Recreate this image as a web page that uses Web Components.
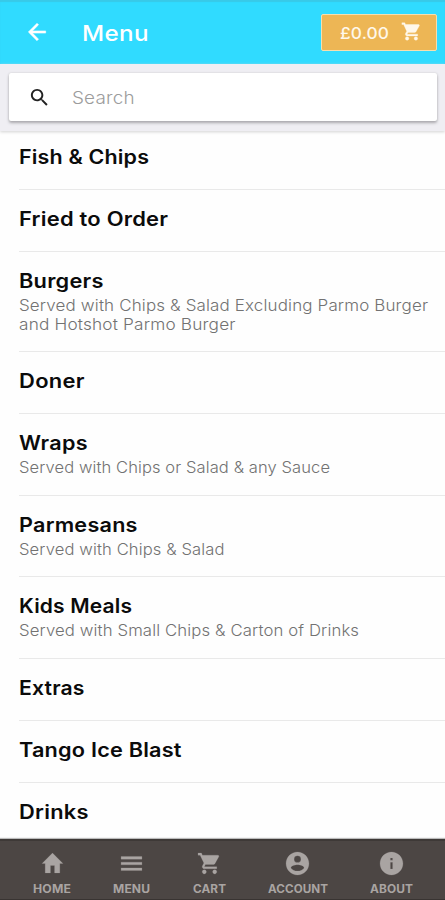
<!DOCTYPE html>
<html lang="en">
<head>
<meta charset="utf-8">
<title>Menu</title>
<style>
html,body{margin:0;height:100%;overflow:hidden;background:#fefefe}
body{font-family:Inter,"Open Sans",sans-serif}
</style>
</head>
<body>
<menu-app></menu-app>
<script>
const ICONS = {
  back: 'M20 11H7.83l5.59-5.59L12 4l-8 8 8 8 1.41-1.41L7.83 13H20v-2z',
  search: 'M15.5 14h-.79l-.28-.27C15.41 12.59 16 11.11 16 9.5 16 5.91 13.09 3 9.5 3S3 5.91 3 9.5 5.91 16 9.5 16c1.61 0 3.09-.59 4.23-1.57l.27.28v.79l5 4.99L20.49 19l-4.99-5zm-6 0C7.01 14 5 11.99 5 9.5S7.01 5 9.5 5 14 7.01 14 9.5 11.99 14 9.5 14z',
  cart: 'M7 18c-1.1 0-1.99.9-1.99 2S5.9 22 7 22s2-.9 2-2-.9-2-2-2zM1 2v2h2l3.6 7.59-1.35 2.45c-.16.28-.25.61-.25.96 0 1.1.9 2 2 2h12v-2H7.42c-.14 0-.25-.11-.25-.25l.03-.12.9-1.63h7.45c.75 0 1.41-.41 1.75-1.03l3.58-6.49c.08-.14.12-.31.12-.48 0-.55-.45-1-1-1H5.21l-.94-2H1zm16 16c-1.1 0-1.99.9-1.99 2s.89 2 1.99 2 2-.9 2-2-.9-2-2-2z',
  home: 'M10 21v-7h4v7h5v-9h3L12 2 2 12h3v9z',
  menu: 'M2 18.8h20v-2.6H2zm0-5.5h20v-2.6H2zM2 5.2v2.6h20V5.2z',
  account: 'M12 1C5.93 1 1 5.93 1 12s4.93 11 11 11 11-4.93 11-11S18.07 1 12 1zm0 3.500a3.300 3.300 0 1 1 0 6.600 3.300 3.300 0 0 1 0-6.600zM12 19.300c-2.750 0-5.200-1.200-6.400-3.100 0-2.300 4.200-3.100 6.400-3.100s6.400.8 6.400 3.100c-1.200 1.900-3.650 3.100-6.400 3.100z',
  about: 'M12 1C5.93 1 1 5.93 1 12s4.93 11 11 11 11-4.93 11-11S18.07 1 12 1zm1.100 16.300h-2.200v-6.500h2.200zm0-8.500h-2.200V6.600h2.200z'
};

class AppIcon extends HTMLElement {
  connectedCallback() {
    const r = this.attachShadow({mode: 'open'});
    r.innerHTML = `<style>:host{display:block;flex:none;width:var(--icon,24px);height:var(--icon,24px)}svg{display:block;width:100%;height:100%;fill:currentColor;stroke:currentColor;stroke-width:var(--weight,0)}</style>
    <svg viewBox="0 0 24 24"><path d="${ICONS[this.getAttribute('name')]}"/></svg>`;
  }
}
customElements.define('app-icon', AppIcon);

/* One line of text, widened mostly by glyph width and partly by tracking, that fills the given width. */
class WideText extends HTMLElement {
  connectedCallback() {
    const r = this.attachShadow({mode: 'open'});
    r.innerHTML = '<style>:host{display:block;flex:none;white-space:nowrap}span{display:inline-block;transform-origin:0 50%}</style><span><slot></slot></span>';
    const span = r.querySelector('span');
    const target = Number(this.getAttribute('width'));
    const natural = span.getBoundingClientRect().width;
    const scale = 1 + 0.85 * (target / natural - 1);
    const gap = (target / scale - natural) / (this.textContent.length - 1);
    span.style.letterSpacing = gap.toFixed(3) + 'px';
    span.style.transform = `scaleX(${scale.toFixed(4)})`;
    this.style.width = target + 'px';
  }
}
customElements.define('wide-text', WideText);

class TopBar extends HTMLElement {
  connectedCallback() {
    this.attachShadow({mode: 'open'}).innerHTML = `<style>
    :host{display:flex;align-items:center;flex:none;box-sizing:border-box;height:64px;padding:1px 8px 0 24px;background:#30dbff;box-shadow:inset 0 2px 1px #38c9e8;color:#fff}
    app-icon{--icon:26px;--weight:.5;margin-top:-1px}
    .title{margin-left:31.500px;font-size:22px;font-weight:500;line-height:28px;margin-top:0}
    .total{display:flex;align-items:center;box-sizing:border-box;margin-left:auto;width:116px;height:37px;padding:0 14px 0 18px;border:1px solid #f6dfae;border-radius:2px;background:#edb655;justify-content:space-between;font-size:16.500px;font-weight:500;color:#fff8ea}
    .total app-icon{--icon:21px;--weight:.4;margin-top:-2px}
    </style>
    <app-icon name="back"></app-icon>
    <wide-text class="title" width="66.5">Menu</wide-text>
    <div class="total"><wide-text width="49">£0.00</wide-text><app-icon name="cart"></app-icon></div>`;
  }
}
customElements.define('top-bar', TopBar);

class SearchBox extends HTMLElement {
  connectedCallback() {
    this.attachShadow({mode: 'open'}).innerHTML = `<style>
    :host{display:block;flex:none;box-sizing:border-box;height:67px;padding:9px 8px 0 9px;background:#efeef3;box-shadow:0 1px 3px #d2d2d2;z-index:1}
    .box{display:flex;align-items:center;height:48px;padding-left:18.500px;background:#fff;border-radius:2px;box-shadow:0 2px 3px #aaa9ae,0 0 2px #ccc;color:#222}
    app-icon{--icon:23px}
    wide-text{margin-left:21px;font-size:17.300px;font-weight:300;color:#9c9c9c}
    </style>
    <div class="box"><app-icon name="search"></app-icon><wide-text width="62.5">Search</wide-text></div>`;
  }
}
customElements.define('search-box', SearchBox);

class MenuRow extends HTMLElement {
  connectedCallback() {
    this.attachShadow({mode: 'open'}).innerHTML = `<style>
    :host{display:block;flex:none;box-sizing:border-box;margin-left:19px;padding-top:16.500px;border-bottom:1px solid #e9e9e9}
    :host(:first-of-type){padding-top:13.500px}
    ::slotted([slot=title]){font-size:19.500px;line-height:24px;font-weight:600;color:#0b0b0b;margin:0 0 3px -.5px}
    ::slotted([slot=note]){font-size:15.300px;line-height:19.300px;font-weight:300;color:#727272;margin-left:-.5px}
    </style><slot name="title"></slot><slot name="note"></slot>`;
  }
}
customElements.define('menu-row', MenuRow);

const ROWS = [
  [59, 'Fish & Chips', 130], [62, 'Fried to Order', 149],
  [100, 'Burgers', 84.5, ['Served with Chips & Salad Excluding Parmo Burger', 409], ['and Hotshot Parmo Burger', 216.5]],
  [62, 'Doner', 65.5],
  [82, 'Wraps', 68.5, ['Served with Chips or Salad & any Sauce', 311]],
  [81, 'Parmesans', 118.5, ['Served with Chips & Salad', 205.5]],
  [82, 'Kids Meals', 113, ['Served with Small Chips & Carton of Drinks', 340]],
  [62, 'Extras', 65.5], [62, 'Tango Ice Blast', 162.5], [62, 'Drinks', 69.5]
];

class MenuList extends HTMLElement {
  connectedCallback() {
    const esc = s => s.replace(/&/g, '&amp;');
    this.attachShadow({mode: 'open'}).innerHTML = `<style>:host{display:flex;flex-direction:column;flex:1;min-height:0;overflow:hidden;background:#fefefe}</style>` +
      ROWS.map(([h, t, w, ...notes]) => `<menu-row style="height:${h}px"><wide-text slot="title" width="${w}">${esc(t)}</wide-text>${notes.map(([s, nw]) => `<wide-text slot="note" width="${nw}">${esc(s)}</wide-text>`).join('')}</menu-row>`).join('');
  }
}
customElements.define('menu-list', MenuList);

class TabItem extends HTMLElement {
  connectedCallback() {
    this.attachShadow({mode: 'open'}).innerHTML = `<style>
    :host{display:flex;flex-direction:column;align-items:center;gap:6px}
    app-icon{--icon:25px;--weight:.2}
    wide-text{font-size:11.200px;line-height:14px;font-weight:700}
    </style><app-icon name="${this.getAttribute('icon')}"></app-icon>
    <wide-text width="${this.getAttribute('width')}">${this.getAttribute('label')}</wide-text>`;
  }
}
customElements.define('tab-item', TabItem);

class TabBar extends HTMLElement {
  connectedCallback() {
    this.attachShadow({mode: 'open'}).innerHTML = `<style>
    :host{display:grid;flex:none;grid-template-columns:80px 79px 76px 101px 87px;box-sizing:border-box;height:61px;padding:10px 0 0 12px;background:#4c4644;border-top:2px solid #3e3937;border-bottom:1px solid #393432;color:#a9a4a2;box-shadow:0 -1px 1px #bbb;z-index:1}
    </style>
    <tab-item icon="home" label="HOME" width="38"></tab-item>
    <tab-item icon="menu" label="MENU" width="37"></tab-item>
    <tab-item icon="cart" label="CART" width="33"></tab-item>
    <tab-item icon="account" label="ACCOUNT" width="60"></tab-item>
    <tab-item icon="about" label="ABOUT" width="43"></tab-item>`;
  }
}
customElements.define('tab-bar', TabBar);

class MenuApp extends HTMLElement {
  connectedCallback() {
    this.attachShadow({mode: 'open'}).innerHTML = `<style>:host{display:flex;flex-direction:column;width:445px;height:900px;overflow:hidden}</style>
    <top-bar></top-bar><search-box></search-box><menu-list></menu-list><tab-bar></tab-bar>`;
  }
}
customElements.define('menu-app', MenuApp);
</script>
</body>
</html>
